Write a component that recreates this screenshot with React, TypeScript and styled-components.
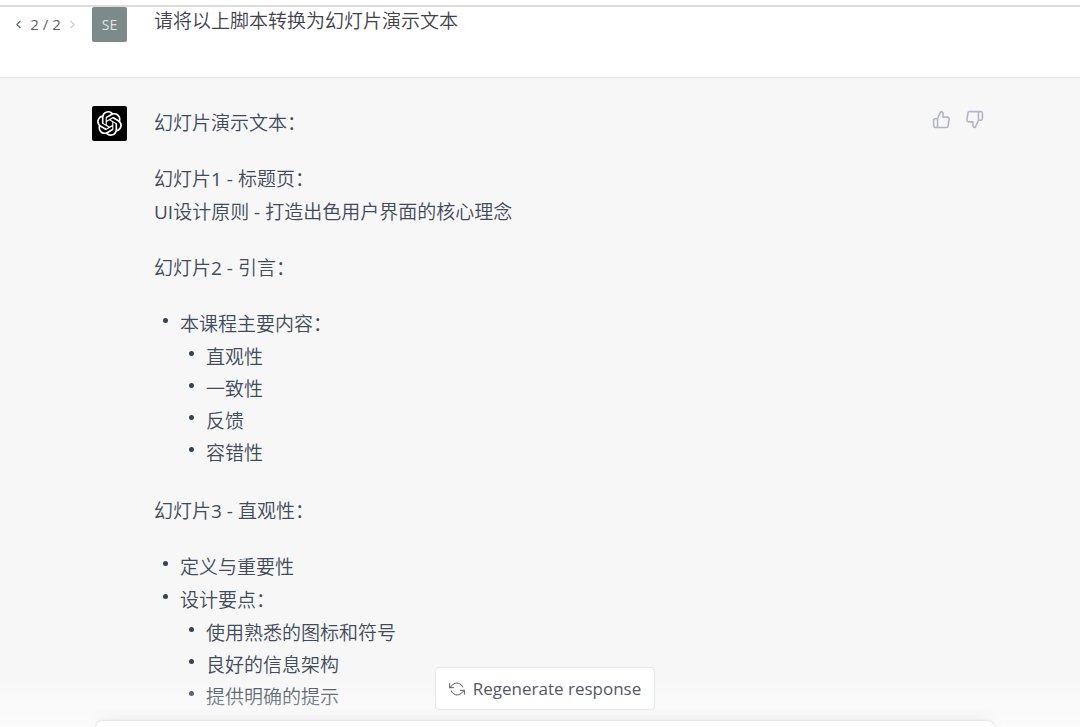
import React from "react";
import styled, { createGlobalStyle } from "styled-components";
import { FiThumbsUp, FiThumbsDown, FiRefreshCcw, FiChevronLeft, FiChevronRight } from "react-icons/fi";
import { SiOpenai } from "react-icons/si";

const GlobalStyle = createGlobalStyle`
  * { box-sizing: border-box; }
  body {
    margin: 0;
    background: #fff;
    font-family: "Open Sans", "Noto Sans CJK SC", sans-serif;
    font-size: 19px;
    font-weight: 350;
    line-height: 33px;
  }
  button, textarea { font: inherit; color: inherit; }
`;

const Page = styled.div`
  position: relative;
  display: flex;
  flex-direction: column;
  height: 100vh;
  overflow: hidden;
`;

const TopBar = styled.header`
  flex: none;
  height: 7px;
  border-bottom: 2px solid #dcdcdc;
`;

const Conversation = styled.main`
  flex: 1;
  min-height: 0;
  overflow: hidden;
  background: #f7f7f7;
`;

const Turn = styled.section<{ $assistant?: boolean }>`
  display: flex;
  align-items: flex-start;
  padding: ${(p) => (p.$assistant ? "28px 96px 120px 0" : "0 96px 35px 0")};
  border-bottom: 1px solid #e3e3e4;
  background: ${(p) => (p.$assistant ? "#f7f7f7" : "#fff")};
  color: ${(p) => (p.$assistant ? "#414b5a" : "#41424d")};
`;

const Gutter = styled.div`
  flex: none;
  width: 92px;
  padding: 1px 13px 0 12px;
`;

const Pager = styled.nav`
  display: flex;
  align-items: center;
  justify-content: space-between;
  font-size: 15px;
  font-weight: 400;
  color: #5f6069;
`;

const PagerButton = styled.button`
  display: flex;
  padding: 0;
  border: 0;
  background: none;
  &:disabled { color: #c9c9d2; }
`;

const Avatar = styled.div<{ $color: string }>`
  flex: none;
  display: flex;
  align-items: center;
  justify-content: center;
  width: 35px;
  height: 35px;
  margin-right: 27px;
  border-radius: 2px;
  background: ${(p) => p.$color};
  color: #fff;
  font-size: 14px;
  font-weight: 400;
`;

const Initials = styled.span`
  color: #dfe5e4;
`;

const Message = styled.div<{ $raised?: boolean }>`
  flex: 1;
  min-width: 0;
  margin-top: ${(p) => (p.$raised ? "-2px" : "1px")};
`;

const Paragraph = styled.p`
  margin: 0 0 23px;
`;

const Latin = styled.span`
  font-weight: 400;
`;

const List = styled.ul`
  margin: 0 0 25px;
  padding: 0 0 0 26px;
  list-style: none;
`;

const SubList = styled(List)`
  margin: 0;
  line-height: 32px;
  padding-bottom: 1px;
`;

const Item = styled.li`
  position: relative;
  &::before {
    content: "";
    position: absolute;
    left: -17px;
    top: 10px;
    width: 5px;
    height: 5px;
    border-radius: 50%;
    background: #374151;
  }
`;

const Feedback = styled.div`
  display: flex;
  gap: 14px;
  padding-top: 4px;
`;

const IconButton = styled.button`
  display: flex;
  padding: 0;
  border: 0;
  background: none;
  color: #b4b4c6;
`;

const Footer = styled.footer`
  position: absolute;
  inset: auto 0 0 0;
  display: flex;
  flex-direction: column;
  align-items: center;
  gap: 11px;
  padding: 20px 86px 0 96px;
  background: linear-gradient(180deg, rgba(255, 255, 255, 0) 40%, rgba(255, 255, 255, 0.6));
`;

const Regenerate = styled.button`
  display: flex;
  align-items: center;
  gap: 8px;
  height: 43px;
  padding: 0 13px;
  border: 1px solid #e7e7e9;
  border-radius: 4px;
  background: #fff;
  color: #565766;
  font-size: 17px;
  font-weight: 400;
`;

const Composer = styled.textarea`
  display: block;
  width: 100%;
  height: 6px;
  padding: 0;
  border: 0;
  border-radius: 8px 8px 0 0;
  background: #fff;
  box-shadow: 0 0 2px rgba(0, 0, 0, 0.2), 0 0 15px rgba(0, 0, 0, 0.12);
  resize: none;
  overflow: hidden;
`;

export default function App() {
  return (
    <Page>
      <GlobalStyle />
      <TopBar />
      <Conversation>
        <Turn>
          <Gutter>
            <Pager aria-label="Message versions">
              <PagerButton aria-label="Previous"><FiChevronLeft size={13} /></PagerButton>
              <span>2 / 2</span>
              <PagerButton aria-label="Next" disabled><FiChevronRight size={13} /></PagerButton>
            </Pager>
          </Gutter>
          <Avatar $color="#7c8b89"><Initials>SE</Initials></Avatar>
          <Message $raised>请将以上脚本转换为幻灯片演示文本</Message>
        </Turn>
        <Turn $assistant>
          <Gutter />
          <Avatar $color="#000"><SiOpenai size={25} /></Avatar>
          <Message>
            <Paragraph>幻灯片演示文本：</Paragraph>
            <Paragraph>
              幻灯片<Latin>1 - </Latin>标题页：<br />
              <Latin>UI</Latin>设计原则<Latin> - </Latin>打造出色用户界面的核心理念
            </Paragraph>
            <Paragraph>幻灯片<Latin>2 - </Latin>引言：</Paragraph>
            <List>
              <Item>
                本课程主要内容：
                <SubList>
                  <Item>直观性</Item>
                  <Item>一致性</Item>
                  <Item>反馈</Item>
                  <Item>容错性</Item>
                </SubList>
              </Item>
            </List>
            <Paragraph>幻灯片<Latin>3 - </Latin>直观性：</Paragraph>
            <List>
              <Item>定义与重要性</Item>
              <Item>
                设计要点：
                <SubList>
                  <Item>使用熟悉的图标和符号</Item>
                  <Item>良好的信息架构</Item>
                  <Item>提供明确的提示</Item>
                </SubList>
              </Item>
            </List>
          </Message>
          <Feedback>
            <IconButton aria-label="Good response"><FiThumbsUp size={19} /></IconButton>
            <IconButton aria-label="Bad response"><FiThumbsDown size={19} /></IconButton>
          </Feedback>
        </Turn>
      </Conversation>
      <Footer>
        <Regenerate><FiRefreshCcw size={16} strokeWidth={1.5} />Regenerate response</Regenerate>
        <Composer aria-label="Message" />
      </Footer>
    </Page>
  );
}
